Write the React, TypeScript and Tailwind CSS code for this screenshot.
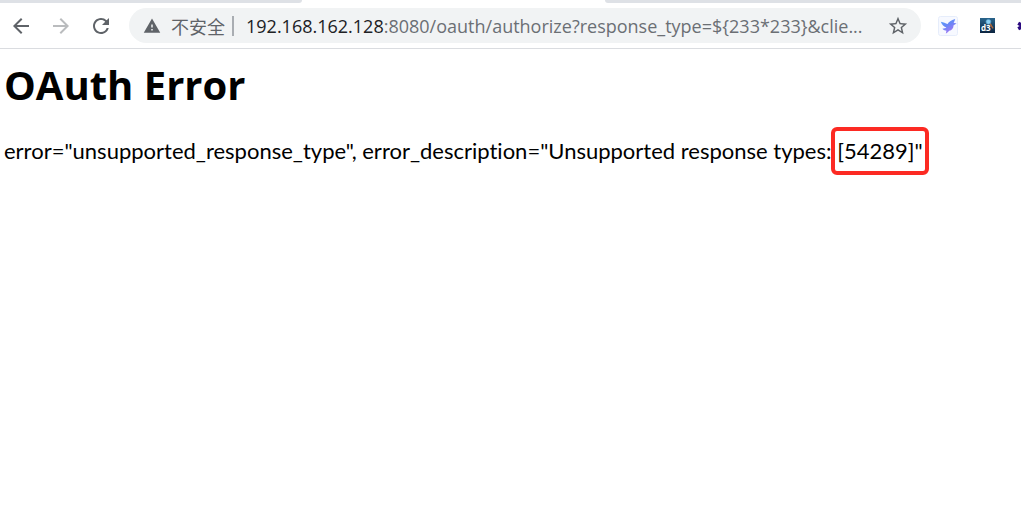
import { MdArrowBack, MdArrowForward, MdRefresh, MdWarning, MdStarBorder } from "react-icons/md";

function BirdIcon() {
  return (
    <svg viewBox="0 0 20 20" className="size-5" aria-hidden="true">
      <defs>
        <linearGradient id="bird" x1="0" y1="0" x2="0.6" y2="1">
          <stop offset="0" stopColor="#4fa4fa" />
          <stop offset="0.5" stopColor="#6a86f6" />
          <stop offset="1" stopColor="#a878f4" />
        </linearGradient>
      </defs>
      <rect x="0.5" y="0.5" width="19" height="19" rx="2" fill="#f7f9ff" stroke="#e6edfb" />
      <path
        d="M2.8 5.8 C5.5 6.6 7.6 7.2 9.6 8 C10.6 6 13 4.2 17.2 3 C16.8 4.6 16.3 5.6 15.6 6.8 L18.6 7.6 L15.6 9.2 C15.4 12.4 13.8 14.2 11.2 14.8 C10.3 16 9.3 16.9 7.8 17.4 C8.3 16.2 8.4 15.5 8.2 14.6 C6.6 14.4 5.2 13.6 4.4 12.7 C6.2 12.7 7.4 12.4 8.4 11.6 C6 10.6 3.8 8.8 2.8 5.8 Z"
        fill="url(#bird)"
      />
    </svg>
  );
}

function D3Icon() {
  return (
    <svg viewBox="0 0 15 15" className="size-[15px]" aria-hidden="true">
      <defs>
        <linearGradient id="tile" x1="0" y1="0" x2="0" y2="1">
          <stop offset="0" stopColor="#2a658c" />
          <stop offset="1" stopColor="#0c2440" />
        </linearGradient>
      </defs>
      <rect width="15" height="15" fill="url(#tile)" />
      <path d="M10 5.4 L13 10.4" stroke="#ad6638" strokeWidth="1.4" />
      <circle cx="8.4" cy="3.8" r="2.4" fill="#8bd0f4" stroke="#5aa3d0" strokeWidth="0.7" />
      <text x="1" y="12.8" fontSize="8" fontWeight="700" fontFamily="Open Sans, sans-serif" fill="#fff">
        d3
      </text>
    </svg>
  );
}

function FlowerIcon() {
  return (
    <svg viewBox="0 0 12 12" className="size-3" aria-hidden="true">
      <path
        d="M6 0.5 V11.5 M1.2 3.2 L10.8 8.8 M1.2 8.8 L10.8 3.2"
        stroke="#2b0a80"
        strokeWidth="3.4"
      />
    </svg>
  );
}

function TabStrip() {
  return (
    <div className="flex h-[3px] bg-white">
      <div className="w-[302px] shrink-0 rounded-br-lg bg-[#dee1e6]" />
      <div className="w-[303px] shrink-0" />
      <div className="flex-1 rounded-bl-lg bg-[#dee1e6]" />
    </div>
  );
}

function AddressBar() {
  return (
    <form
      onSubmit={(event) => event.preventDefault()}
      className="ml-4 flex h-[35px] min-w-0 flex-1 items-center rounded-full bg-[#f1f3f4] pr-3 pl-[14px] text-lg text-[#5f6368]"
    >
      <button type="button" className="flex shrink-0 items-center gap-[10px]">
        <MdWarning className="size-[18px]" aria-hidden="true" />
        <span className="font-['Noto_Sans_CJK_SC',sans-serif] leading-6 font-normal">不安全</span>
      </button>
      <span className="ml-[7px] h-5 w-0.5 shrink-0 bg-[#a9adb2]" />
      <label htmlFor="address" className="ml-3 shrink-0 text-[#202124]">
        192.168.162.128
      </label>
      <input
        id="address"
        type="text"
        defaultValue=":8080/oauth/authorize?response_type=${233*233}&clie..."
        className="min-w-0 flex-1 bg-transparent text-[#6b6f74] outline-none"
      />
      <button type="button" aria-label="Bookmark this page" className="ml-3 shrink-0">
        <MdStarBorder className="size-[22px]" />
      </button>
    </form>
  );
}

export default function App() {
  return (
    <div className="min-h-screen overflow-x-hidden bg-white font-['Open_Sans','Noto_Sans_CJK_SC',sans-serif]">
      <header className="border-b border-[#dadce0]">
        <TabStrip />
        <nav className="flex h-[45px] items-center pl-[9px] text-[#5f6368]">
          <button type="button" aria-label="Back">
            <MdArrowBack className="size-6" />
          </button>
          <button type="button" aria-label="Forward" className="ml-4 text-[#babcbe]">
            <MdArrowForward className="size-6" />
          </button>
          <button type="button" aria-label="Reload" className="ml-4">
            <MdRefresh className="size-6" />
          </button>
          <AddressBar />
          <div className="flex w-[100px] shrink-0 items-center overflow-hidden pl-[17px]">
            <button type="button" aria-label="Bird extension" className="shrink-0">
              <BirdIcon />
            </button>
            <button type="button" aria-label="D3 extension" className="ml-[22px] shrink-0">
              <D3Icon />
            </button>
            <button type="button" aria-label="Flower extension" className="ml-[22px] shrink-0">
              <FlowerIcon />
            </button>
          </div>
        </nav>
      </header>
      <main className="px-1 pt-2 text-black">
        <h1 className="text-[40px] leading-[56px] font-bold">OAuth Error</h1>
        <p className="mt-6 font-['Lato',sans-serif] text-[22px] leading-7 [font-variant-ligatures:none]">
          error="unsupported_response_type", error_description="Unsupported response types:{" "}
          <span className="relative inline-block">
            [54289]"
            <span className="absolute -inset-x-[6px] -inset-y-[10px] rounded-md border-4 border-[#fc2a23]" />
          </span>
        </p>
      </main>
    </div>
  );
}
